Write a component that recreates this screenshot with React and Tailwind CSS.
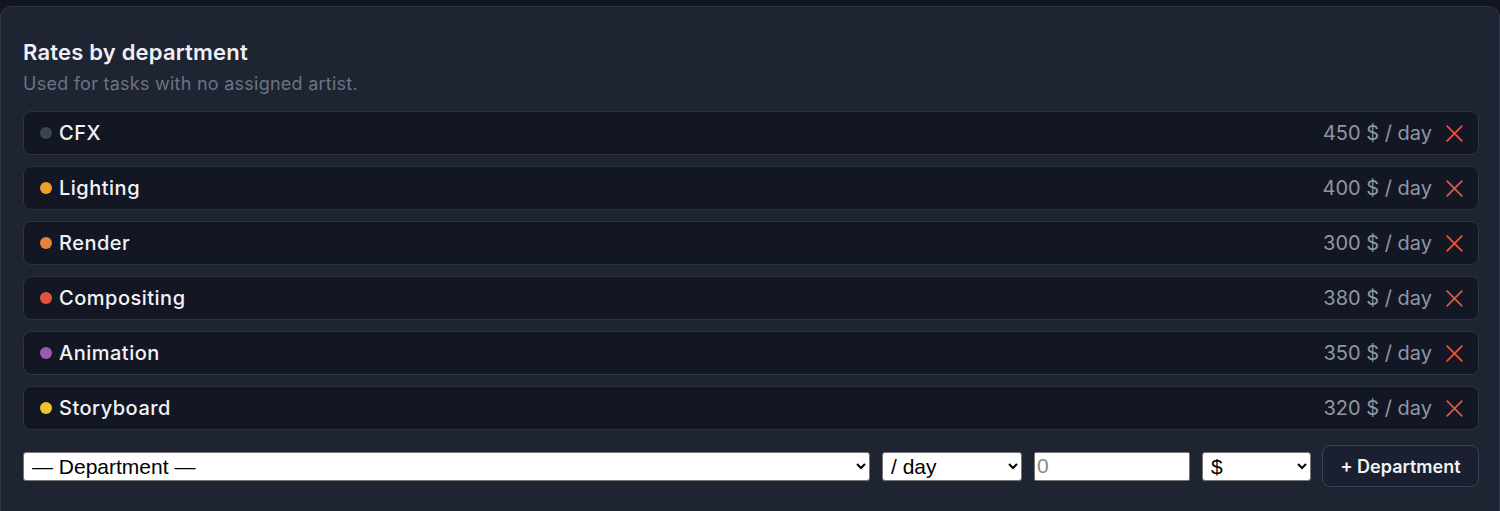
// Per-department day rates, in display order
const DEPARTMENTS = [
  { name: 'CFX', color: '#3b4354', rate: 450 },
  { name: 'Lighting', color: '#f0a02c', rate: 400 },
  { name: 'Render', color: '#e8843a', rate: 300 },
  { name: 'Compositing', color: '#e6533b', rate: 380 },
  { name: 'Animation', color: '#9b59b6', rate: 350 },
  { name: 'Storyboard', color: '#f1c232', rate: 320 },
];

const UI_FONT = { fontFamily: 'Inter, "Noto Sans", sans-serif' };
const FORM_FONT = { fontFamily: '"Liberation Sans", Arial, sans-serif' };

function RemoveIcon() {
  return (
    <svg width="17" height="17" viewBox="0 0 17 17" fill="none" stroke="currentColor" strokeWidth="1.8" strokeLinecap="round">
      <path d="M1.2 1.2l14.6 14.6M15.8 1.2L1.2 15.8" />
    </svg>
  );
}

function RateRow({ dept }) {
  return (
    <div className="flex h-[44px] items-center rounded-lg border border-[#2c3344] bg-[#131724] pl-[16px] pr-[15px]">
      <span className="h-[12px] w-[12px] shrink-0 rounded-full" style={{ backgroundColor: dept.color }} />
      <span className="ml-[7px] text-[20px] font-medium tracking-[0.5px] text-[#f1f3f7]">{dept.name}</span>
      <span className="ml-auto text-[20px] text-[#8f96a3]">{dept.rate} $ / day</span>
      <button className="ml-[14px] flex text-[#e5533f]">
        <RemoveIcon />
      </button>
    </div>
  );
}

export default function App() {
  return (
    <div className="min-h-[511px] bg-[#121624] pt-[6px]" style={UI_FONT}>
      <div className="min-h-[505px] rounded-t-xl border border-b-0 border-[#2f3647] bg-[#1f2433] pt-[31px] pr-[20px] pb-6 pl-[22px]">
        <h2 className="text-[22px] leading-7 font-semibold tracking-[0.2px] text-[#eef0f5]">Rates by department</h2>
        <p className="mt-[6px] text-[18px] leading-6 tracking-[0.25px] text-[#6c7383]">Used for tasks with no assigned artist.</p>

        <div className="mt-[15px] flex flex-col gap-[11px]">
          {DEPARTMENTS.map((d) => (
            <RateRow key={d.name} dept={d} />
          ))}
        </div>

        {/* Add-department form */}
        <div className="mt-[15px] flex items-center gap-[12px]" style={FORM_FONT}>
          <select className="h-[29px] min-w-0 flex-1 rounded-[3px] border border-[#767676] bg-white pl-1 text-[21px] text-black">
            <option>— Department —</option>
          </select>
          <select className="h-[29px] w-[140px] shrink-0 rounded-[3px] border border-[#767676] bg-white pl-1 text-[21px] text-black">
            <option>/ day</option>
          </select>
          <input
            type="number"
            placeholder="0"
            className="h-[29px] w-[156px] shrink-0 rounded-[2px] border border-[#767676] bg-white px-[2px] text-[21px] text-black placeholder:text-[#8a8a8a]"
          />
          <select className="h-[29px] w-[109px] shrink-0 rounded-[3px] border border-[#767676] bg-white pl-1 text-[21px] text-black">
            <option>$</option>
          </select>
          <button
            className="-ml-px h-[42px] w-[157px] shrink-0 rounded-lg border border-[#3a4256] bg-[#1b2030] text-[18px] font-semibold text-[#f1f3f7]"
            style={UI_FONT}
          >
            + Department
          </button>
        </div>
      </div>
    </div>
  );
}
